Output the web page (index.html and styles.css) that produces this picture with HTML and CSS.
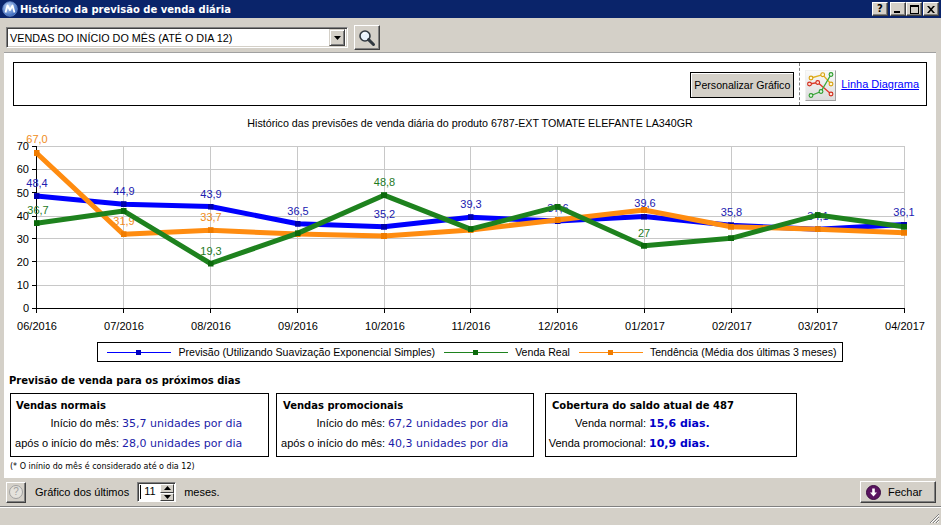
FILE: index.html
```html
<!DOCTYPE html>
<html lang="pt-BR">
<head>
<meta charset="utf-8">
<title>Histórico da previsão de venda diária</title>
<link rel="stylesheet" href="styles.css">
</head>
<body>
<div class="window">
  <div class="titlebar">
    <svg class="app-icon" width="16" height="16" viewBox="0 0 16 16">
      <defs>
        <radialGradient id="ai" cx="0.4" cy="0.35" r="0.7">
          <stop offset="0" stop-color="#c8dcf8"/>
          <stop offset="1" stop-color="#2a5cb8"/>
        </radialGradient>
      </defs>
      <circle cx="8" cy="8" r="7.3" fill="url(#ai)" stroke="#6a8cc8" stroke-width="0.8"/>
      <path d="M3.5 11.5 L5.5 4.5 L8 9 L10.5 4.5 L12.5 11.5" fill="none" stroke="#fff" stroke-width="1.8" stroke-linejoin="round"/>
    </svg>
    <span class="title">Histórico da previsão de venda diária</span>
    <div class="caption-btns">
      <span class="cap-btn cap-help">?</span>
      <span class="cap-btn"><svg width="8" height="7" viewBox="0 0 8 7"><rect x="0" y="5" width="6" height="2" fill="#000"/></svg></span>
      <span class="cap-btn"><svg width="9" height="9" viewBox="0 0 9 9"><rect x="0.5" y="0.5" width="8" height="8" fill="none" stroke="#000"/><rect x="0" y="0" width="9" height="2" fill="#000"/></svg></span>
      <span class="cap-btn cap-close"><svg width="8" height="7" viewBox="0 0 8 7"><path d="M0 0 L2 0 L4 2.3 L6 0 L8 0 L5 3.5 L8 7 L6 7 L4 4.7 L2 7 L0 7 L3 3.5 Z" fill="#000"/></svg></span>
    </div>
  </div>

  <div class="toolbar">
    <div class="combo">
      <span class="combo-text">VENDAS DO INÍCIO DO MÊS (ATÉ O DIA 12)</span>
      <span class="combo-btn"><svg width="7" height="4" viewBox="0 0 7 4"><path d="M0 0 H7 L3.5 4 Z" fill="#000"/></svg></span>
    </div>
    <span class="search-btn">
      <svg width="18" height="18" viewBox="0 0 18 18">
        <circle cx="7" cy="7" r="5" fill="#e8f2fc" stroke="#303840" stroke-width="1.6"/>
        <path d="M5 5.2 A2.6 2.6 0 0 1 7.5 4.4" fill="none" stroke="#fff" stroke-width="1.2"/>
        <path d="M10.6 10.6 L15.5 15.5" stroke="#303840" stroke-width="3" stroke-linecap="round"/>
      </svg>
    </span>
  </div>

  <div class="main">
    <div class="topbox">
      <span class="btn-custom">Personalizar Gráfico</span>
      <span class="vsep"></span>
      <span class="chart-icon">
        <svg width="31" height="31" viewBox="0 0 31 31">
          <polyline points="6,8 17.7,4.7 26,14" fill="none" stroke="#e0b020" stroke-width="1.3"/>
          <polyline points="4.5,14 12.7,12.5 26,24" fill="none" stroke="#e03a2a" stroke-width="1.3"/>
          <polyline points="6,25.5 16,21.5 26,4.5" fill="none" stroke="#3aa83a" stroke-width="1.3"/>
          <g stroke-width="1.1" fill="#fff8d8">
            <circle cx="6" cy="8" r="1.9" stroke="#d8a010"/>
            <circle cx="17.7" cy="4.7" r="1.9" stroke="#d8a010"/>
            <circle cx="26" cy="14" r="1.9" stroke="#d8a010"/>
          </g>
          <g stroke-width="1.1" fill="#ffe0d8">
            <circle cx="4.5" cy="14" r="1.9" stroke="#d02a1a"/>
            <circle cx="12.7" cy="12.5" r="1.9" stroke="#d02a1a"/>
            <circle cx="26" cy="24" r="1.9" stroke="#d02a1a"/>
          </g>
          <g stroke-width="1.1" fill="#e0f8e0">
            <circle cx="6" cy="25.5" r="1.9" stroke="#2a982a"/>
            <circle cx="16" cy="21.5" r="1.9" stroke="#2a982a"/>
            <circle cx="26" cy="4.5" r="1.9" stroke="#2a982a"/>
          </g>
        </svg>
      </span>
      <a class="link" href="#">Linha Diagrama</a>
    </div>

    <svg class="chart" width="932" height="234" viewBox="4 106 932 234">
      <defs>
        <marker id="mb" markerWidth="6" markerHeight="6" refX="3" refY="3" markerUnits="userSpaceOnUse"><rect width="6" height="6" fill="#0000b0"/></marker>
        <marker id="mg" markerWidth="6" markerHeight="6" refX="3" refY="3" markerUnits="userSpaceOnUse"><rect width="6" height="6" fill="#0c6a0c"/></marker>
        <marker id="mo" markerWidth="6" markerHeight="6" refX="3" refY="3" markerUnits="userSpaceOnUse"><rect width="6" height="6" fill="#f07c00"/></marker>
      </defs>
      <text class="ctitle" x="470" y="127" text-anchor="middle">Histórico das previsões de venda diária do produto 6787-EXT TOMATE ELEFANTE LA340GR</text>

      <g class="grid">
        <line x1="36" y1="146.5" x2="904.5" y2="146.5"/>
        <line x1="36" y1="169.5" x2="904.5" y2="169.5"/>
        <line x1="36" y1="192.5" x2="904.5" y2="192.5"/>
        <line x1="36" y1="216.5" x2="904.5" y2="216.5"/>
        <line x1="36" y1="238.5" x2="904.5" y2="238.5"/>
        <line x1="36" y1="261.5" x2="904.5" y2="261.5"/>
        <line x1="36" y1="285.5" x2="904.5" y2="285.5"/>
        <line x1="123.5" y1="146" x2="123.5" y2="308"/>
        <line x1="210.5" y1="146" x2="210.5" y2="308"/>
        <line x1="297.5" y1="146" x2="297.5" y2="308"/>
        <line x1="384.5" y1="146" x2="384.5" y2="308"/>
        <line x1="470.5" y1="146" x2="470.5" y2="308"/>
        <line x1="557.5" y1="146" x2="557.5" y2="308"/>
        <line x1="644.5" y1="146" x2="644.5" y2="308"/>
        <line x1="731.5" y1="146" x2="731.5" y2="308"/>
        <line x1="817.5" y1="146" x2="817.5" y2="308"/>
        <line x1="904.5" y1="146" x2="904.5" y2="308"/>
      </g>

      <g class="axis">
        <line x1="36.5" y1="146" x2="36.5" y2="313"/>
        <line x1="32" y1="308.5" x2="905" y2="308.5"/>
        <line x1="32" y1="146.5" x2="36" y2="146.5"/>
        <line x1="32" y1="169.5" x2="36" y2="169.5"/>
        <line x1="32" y1="192.5" x2="36" y2="192.5"/>
        <line x1="32" y1="216.5" x2="36" y2="216.5"/>
        <line x1="32" y1="238.5" x2="36" y2="238.5"/>
        <line x1="32" y1="261.5" x2="36" y2="261.5"/>
        <line x1="32" y1="285.5" x2="36" y2="285.5"/>
        <line x1="123.5" y1="308" x2="123.5" y2="313"/>
        <line x1="210.5" y1="308" x2="210.5" y2="313"/>
        <line x1="297.5" y1="308" x2="297.5" y2="313"/>
        <line x1="384.5" y1="308" x2="384.5" y2="313"/>
        <line x1="470.5" y1="308" x2="470.5" y2="313"/>
        <line x1="557.5" y1="308" x2="557.5" y2="313"/>
        <line x1="644.5" y1="308" x2="644.5" y2="313"/>
        <line x1="731.5" y1="308" x2="731.5" y2="313"/>
        <line x1="817.5" y1="308" x2="817.5" y2="313"/>
        <line x1="904.5" y1="308" x2="904.5" y2="313"/>
      </g>

      <g class="ylabels" text-anchor="end">
        <text x="29" y="150">70</text>
        <text x="29" y="173">60</text>
        <text x="29" y="196.5">50</text>
        <text x="29" y="220">40</text>
        <text x="29" y="242.5">30</text>
        <text x="29" y="265.5">20</text>
        <text x="29" y="289">10</text>
        <text x="29" y="312">0</text>
      </g>

      <g class="xlabels" text-anchor="middle">
        <text x="37" y="330">06/2016</text>
        <text x="124" y="330">07/2016</text>
        <text x="211" y="330">08/2016</text>
        <text x="298" y="330">09/2016</text>
        <text x="385" y="330">10/2016</text>
        <text x="471" y="330">11/2016</text>
        <text x="558" y="330">12/2016</text>
        <text x="645" y="330">01/2017</text>
        <text x="732" y="330">02/2017</text>
        <text x="818" y="330">03/2017</text>
        <text x="905" y="330">04/2017</text>
      </g>

      <polyline class="s-blue" points="36.5,196.1 123.5,204.2 210.5,206.5 297.5,223.7 384,226.7 470.5,217.2 557.5,221.1 644,216.5 731,225.3 817.5,229.2 904,224.6"/>
      <g class="lbl-blue" text-anchor="middle">
        <text x="37" y="187">48,4</text>
        <text x="124" y="195">44,9</text>
        <text x="211" y="197.5">43,9</text>
        <text x="298" y="214.5">36,5</text>
        <text x="384.5" y="217.5">35,2</text>
        <text x="471" y="208">39,3</text>
        <text x="558" y="212">37,6</text>
        <text x="645" y="206.5">39,6</text>
        <text x="731.5" y="216.3">35,8</text>
        <text x="818" y="220">34,1</text>
        <text x="904" y="215.5">36,1</text>
      </g>

      <polyline class="s-orange" points="36.5,153 123.5,234.3 210.5,230.2 297.5,234.1 384,236 470.5,229.9 557.5,220 644,210 731,226.7 817.5,229.2 904,232.7"/>
      <g class="lbl-orange" text-anchor="middle">
        <text x="37" y="143">67,0</text>
        <text x="124" y="225">31,9</text>
        <text x="211" y="221">33,7</text>
      </g>

      <polyline class="s-green" points="36.5,223.2 123.5,210.9 210.5,263.5 297.5,233.4 384,195.2 470.5,229.2 557.5,206.7 644,245.7 731,238.3 817.5,215.1 904,226.7"/>
      <g class="lbl-green" text-anchor="middle">
        <text x="38" y="214">36,7</text>
        <text x="211" y="254.5">19,3</text>
        <text x="384.5" y="185.5">48,8</text>
        <text x="644" y="236.5">27</text>
      </g>
    </svg>

    <div class="legend">
      <svg class="lg-sample" width="64" height="9" viewBox="0 0 64 9"><line x1="0" y1="4.5" x2="64" y2="4.5" stroke="#0000ff"/><rect x="29" y="2" width="5" height="5" fill="#0000c0"/></svg>
      <span class="lg-text">Previsão (Utilizando Suavização Exponencial Simples)</span>
      <svg class="lg-sample" width="64" height="9" viewBox="0 0 64 9"><line x1="0" y1="4.5" x2="64" y2="4.5" stroke="#1e821e"/><rect x="29" y="2" width="5" height="5" fill="#0c6a0c"/></svg>
      <span class="lg-text">Venda Real</span>
      <svg class="lg-sample" width="64" height="9" viewBox="0 0 64 9"><line x1="0" y1="4.5" x2="64" y2="4.5" stroke="#ff8c10"/><rect x="29" y="2" width="5" height="5" fill="#f07c00"/></svg>
      <span class="lg-text">Tendência (Média dos últimas 3 meses)</span>
    </div>

    <div class="section-title">Previsão de venda para os próximos dias</div>

    <div class="cards">
      <div class="card card-normal">
        <div class="card-title">Vendas normais</div>
        <div class="row"><span class="lbl">Início do mês:</span><span class="val">35,7 unidades por dia</span></div>
        <div class="row"><span class="lbl">após o início do mês:</span><span class="val">28,0 unidades por dia</span></div>
      </div>
      <div class="card card-promo">
        <div class="card-title">Vendas promocionais</div>
        <div class="row"><span class="lbl">Início do mês:</span><span class="val">67,2 unidades por dia</span></div>
        <div class="row"><span class="lbl">após o início do mês:</span><span class="val">40,3 unidades por dia</span></div>
      </div>
      <div class="card card-cover">
        <div class="card-title">Cobertura do saldo atual de 487</div>
        <div class="row"><span class="lbl">Venda normal:</span><span class="val strong">15,6 dias.</span></div>
        <div class="row"><span class="lbl">Venda promocional:</span><span class="val strong">10,9 dias.</span></div>
      </div>
    </div>

    <div class="footnote">(* O inínio do mês é considerado até o dia 12)</div>
  </div>

  <div class="bottombar">
    <span class="help-btn"><span class="help-circle">?</span></span>
    <span class="bb-label">Gráfico dos últimos</span>
    <span class="spinner">
      <span class="spin-value">11</span>
      <span class="spin-btns">
        <span class="spin-btn"><svg width="7" height="4" viewBox="0 0 7 4"><path d="M0 4 H7 L3.5 0 Z" fill="#000"/></svg></span>
        <span class="spin-btn"><svg width="7" height="4" viewBox="0 0 7 4"><path d="M0 0 H7 L3.5 4 Z" fill="#000"/></svg></span>
      </span>
    </span>
    <span class="bb-label bb-meses">meses.</span>
    <span class="bb-spacer"></span>
    <span class="close-btn">
      <svg width="15" height="15" viewBox="0 0 15 15">
        <circle cx="7.5" cy="7.5" r="7" fill="#5a1460" stroke="#3a0a40" stroke-width="1"/>
        <path d="M6.2 3.5 H8.8 V7.5 H11 L7.5 11.5 L4 7.5 H6.2 Z" fill="#fff"/>
      </svg>
      <span>Fechar</span>
    </span>
  </div>

  <div class="statusbar">
    <svg class="grip" width="12" height="12" viewBox="0 0 12 12">
      <path d="M11 2 L2 11 M11 5 L5 11 M11 8 L8 11" stroke="#808080" stroke-width="1"/>
      <path d="M11 3 L3 11 M11 6 L6 11 M11 9 L9 11" stroke="#fff" stroke-width="1"/>
    </svg>
  </div>
</div>
</body>
</html>
```

FILE: styles.css
```css
* { box-sizing: border-box; }

html, body {
  margin: 0;
  padding: 0;
}

body {
  width: 941px;
  height: 525px;
  overflow: hidden;
  background: #d4d0c8;
  font-family: "Liberation Sans", Arial, sans-serif;
  font-size: 11px;
  color: #000;
}

.window {
  display: flex;
  flex-direction: column;
  height: 525px;
}

/* ---------- title bar ---------- */
.titlebar {
  height: 18px;
  flex: none;
  background: #0a246a;
  display: flex;
  align-items: center;
  padding: 0 2px 0 2px;
  color: #fff;
}

.app-icon {
  flex: none;
  margin-right: 2px;
}

.title {
  flex: 1;
  font-family: "DejaVu Sans", sans-serif;
  font-weight: bold;
  font-size: 10px;
  white-space: nowrap;
}

.caption-btns {
  display: flex;
  align-items: center;
}

.cap-btn {
  width: 16px;
  height: 14px;
  background: #d4d0c8;
  border-top: 1px solid #fff;
  border-left: 1px solid #fff;
  border-right: 1px solid #404040;
  border-bottom: 1px solid #404040;
  box-shadow: inset -1px -1px 0 #808080;
  display: flex;
  align-items: center;
  justify-content: center;
  color: #000;
  font-family: "DejaVu Sans", sans-serif;
  font-weight: bold;
  font-size: 10px;
  line-height: 1;
}

.cap-help {
  margin-right: 2px;
}

.cap-close {
  margin-left: 1px;
}

/* ---------- toolbar ---------- */
.toolbar {
  height: 34px;
  flex: none;
  display: flex;
  align-items: center;
  padding: 5px 0 0 6px;
}

.combo {
  width: 342px;
  height: 21px;
  background: #fff;
  border-top: 1px solid #808080;
  border-left: 1px solid #808080;
  border-right: 1px solid #fff;
  border-bottom: 1px solid #fff;
  box-shadow: inset 1px 1px 0 #404040, inset -1px -1px 0 #d4d0c8;
  display: flex;
  align-items: center;
  padding: 0 2px 0 3px;
}

.combo-text {
  flex: 1;
  font-size: 10.8px;
  white-space: nowrap;
}

.combo-btn {
  width: 16px;
  height: 17px;
  background: #d4d0c8;
  border-top: 1px solid #d4d0c8;
  border-left: 1px solid #d4d0c8;
  border-right: 1px solid #404040;
  border-bottom: 1px solid #404040;
  box-shadow: inset 1px 1px 0 #fff, inset -1px -1px 0 #808080;
  display: flex;
  align-items: center;
  justify-content: center;
}

.search-btn {
  width: 26px;
  height: 25px;
  margin-left: 6px;
  background: #d4d0c8;
  border-top: 1px solid #fff;
  border-left: 1px solid #fff;
  border-right: 1px solid #404040;
  border-bottom: 1px solid #404040;
  box-shadow: inset -1px -1px 0 #808080;
  display: flex;
  align-items: center;
  justify-content: center;
}

/* ---------- main white panel ---------- */
.main {
  width: 932px;
  height: 426px;
  flex: none;
  margin-left: 4px;
  background: #fff;
  border-top: 1px solid #a0a0a0;
  overflow: hidden;
}

.topbox {
  width: 914px;
  height: 44px;
  margin: 9px 0 0 9px;
  border: 1px solid #000;
  display: flex;
  align-items: center;
  justify-content: flex-end;
}

.btn-custom {
  width: 104px;
  height: 26px;
  margin-top: 1px;
  background: #d4d0c8;
  border: 1px solid #000;
  box-shadow: inset 1px 1px 0 #fff;
  display: flex;
  align-items: center;
  justify-content: center;
  white-space: nowrap;
  font-size: 10.6px;
}

.vsep {
  align-self: stretch;
  margin-left: 5px;
  border-left: 1px dashed #808080;
}

.chart-icon {
  width: 31px;
  height: 31px;
  margin-left: 5px;
  margin-top: 2px;
  background: linear-gradient(#fafafa, #dcdcdc);
  border-top: 1px solid #f0f0f0;
  border-left: 1px solid #f0f0f0;
  border-right: 1px solid #a0a0a0;
  border-bottom: 1px solid #a0a0a0;
  display: block;
}

.chart-icon svg {
  display: block;
  margin: -1px 0 0 -1px;
}

.link {
  margin: 0 7px 0 5px;
  color: #0000ff;
  text-decoration: underline;
  white-space: nowrap;
}

/* ---------- chart ---------- */
.chart {
  display: block;
  font-family: "Liberation Sans", Arial, sans-serif;
  font-size: 11px;
}

.ctitle {
  fill: #000;
  font-size: 10.7px;
}

.grid line {
  stroke: #c8c8c8;
  stroke-width: 1;
}

.axis line {
  stroke: #000;
  stroke-width: 1;
}

.ylabels text,
.xlabels text {
  fill: #000;
}

.s-blue,
.s-green,
.s-orange {
  fill: none;
  stroke-width: 5;
  stroke-linejoin: round;
}

.s-blue {
  stroke: #0000ff;
  marker-start: url(#mb);
  marker-mid: url(#mb);
  marker-end: url(#mb);
}

.s-green {
  stroke: #1e821e;
  marker-start: url(#mg);
  marker-mid: url(#mg);
  marker-end: url(#mg);
}

.s-orange {
  stroke: #ff8c10;
  marker-start: url(#mo);
  marker-mid: url(#mo);
  marker-end: url(#mo);
}

.lbl-blue text { fill: #2020b0; }
.lbl-green text { fill: #1e7a1e; }
.lbl-orange text { fill: #f08c20; }

/* ---------- legend ---------- */
.legend {
  width: fit-content;
  height: 20px;
  margin: 2px auto 0;
  border: 1px solid #000;
  display: flex;
  align-items: center;
  padding: 0 5px 0 9px;
  font-size: 10.6px;
}

.lg-sample {
  display: block;
  flex: none;
}

.lg-text {
  margin: 0 9px 0 7px;
  white-space: nowrap;
}

.lg-text:last-child {
  margin-right: 0;
}

/* ---------- forecast section ---------- */
.section-title {
  margin: 12px 0 0 5px;
  height: 14px;
  line-height: 14px;
  font-family: "DejaVu Sans", sans-serif;
  font-weight: bold;
  font-size: 10px;
}

.cards {
  display: flex;
  margin-top: 5px;
  padding-left: 6px;
}

.card {
  height: 64px;
  border: 1px solid #000;
  padding-top: 4px;
}

.card-normal { width: 259px; }
.card-promo { width: 258px; margin-left: 7px; }
.card-cover { width: 252px; margin-left: 11px; }

.card-title {
  height: 15px;
  line-height: 15px;
  padding-left: 5px;
  font-family: "DejaVu Sans", sans-serif;
  font-weight: bold;
  font-size: 10px;
  white-space: nowrap;
}

.card-promo .card-title,
.card-cover .card-title {
  padding-left: 6px;
}

.row {
  display: grid;
  grid-template-columns: 108px auto;
  column-gap: 3px;
  height: 20px;
  align-items: center;
}

.card-cover .row {
  grid-template-columns: 100px auto;
}

.lbl {
  text-align: right;
  white-space: nowrap;
}

.val {
  font-family: "DejaVu Sans", sans-serif;
  font-size: 11px;
  color: #1c1ca8;
  white-space: nowrap;
}

.val.strong {
  font-weight: bold;
  color: #0000c8;
}

.footnote {
  margin: 4px 0 0 6px;
  line-height: 12px;
  font-family: "DejaVu Sans", sans-serif;
  font-size: 8px;
}

/* ---------- bottom bar ---------- */
.bottombar {
  height: 28px;
  flex: none;
  display: flex;
  align-items: center;
  padding: 0 5px 0 6px;
}

.help-btn {
  width: 20px;
  height: 21px;
  border-top: 1px solid #fff;
  border-left: 1px solid #fff;
  border-right: 1px solid #404040;
  border-bottom: 1px solid #404040;
  box-shadow: inset -1px -1px 0 #808080;
  display: flex;
  align-items: center;
  justify-content: center;
}

.help-circle {
  width: 14px;
  height: 14px;
  border-radius: 50%;
  border: 1px solid #a0a0a0;
  background: #e4e2dc;
  color: #a0a0a0;
  font-size: 10px;
  line-height: 12px;
  text-align: center;
}

.bb-label {
  margin-left: 9px;
  white-space: nowrap;
}

.spinner {
  width: 39px;
  height: 20px;
  margin-left: 8px;
  background: #fff;
  border-top: 1px solid #808080;
  border-left: 1px solid #808080;
  border-right: 1px solid #fff;
  border-bottom: 1px solid #fff;
  box-shadow: inset 1px 1px 0 #404040;
  display: flex;
  align-items: stretch;
}

.spin-value {
  flex: 1;
  padding: 0 0 0 3px;
  border-left: 1px solid #000;
  margin: 2px 0 2px 2px;
  line-height: 13px;
}

.spin-btns {
  width: 15px;
  display: flex;
  flex-direction: column;
  padding: 1px 1px 0 0;
}

.spin-btn {
  flex: 1;
  background: #d4d0c8;
  border-top: 1px solid #fff;
  border-left: 1px solid #fff;
  border-right: 1px solid #404040;
  border-bottom: 1px solid #404040;
  display: flex;
  align-items: center;
  justify-content: center;
}

.bb-meses {
  margin-left: 8px;
}

.bb-spacer {
  flex: 1;
}

.close-btn {
  width: 76px;
  height: 22px;
  background: #d4d0c8;
  border-top: 1px solid #fff;
  border-left: 1px solid #fff;
  border-right: 1px solid #404040;
  border-bottom: 1px solid #404040;
  box-shadow: inset -1px -1px 0 #808080;
  display: flex;
  align-items: center;
  padding-left: 5px;
  gap: 7px;
}

.close-btn svg {
  display: block;
}

/* ---------- status bar ---------- */
.statusbar {
  flex: 1;
  border-top: 1px solid #808080;
  box-shadow: inset 0 1px 0 #fff;
  display: flex;
  justify-content: flex-end;
  align-items: flex-end;
  padding: 0 1px 1px 0;
}

.grip {
  display: block;
}
```
